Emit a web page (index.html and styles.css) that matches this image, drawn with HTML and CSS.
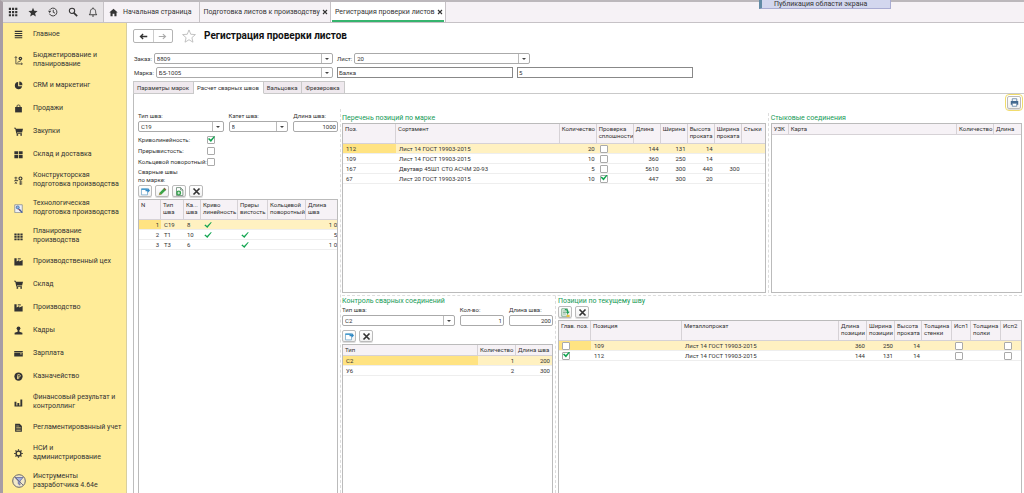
FILE: index.html
```html
<!DOCTYPE html>
<html lang="ru">
<head>
	<meta charset="utf-8">
	<title>Регистрация проверки листов</title>
	<link rel="stylesheet" href="styles.css">
</head>
<body>
<svg class="defs" width="0" height="0">
	<symbol id="i-grid" viewBox="0 0 12 12"><path d="M1 1h2.600v2.600H1zM4.800 1h2.600v2.600H4.800zM8.600 1h2.600v2.600H8.600zM1 4.800h2.600v2.600H1zM4.800 4.800h2.600v2.600H4.800zM8.600 4.800h2.600v2.600H8.600zM1 8.600h2.600v2.600H1zM4.800 8.600h2.600v2.600H4.800zM8.600 8.600h2.600v2.600H8.600z"/></symbol>
	<symbol id="i-star" viewBox="0 0 12 12"><path d="M6 .8l1.500 3.700 4 .3-3 2.600.9 3.900L6 9.200l-3.400 2.100.9-3.900-3-2.600 4-.3z"/></symbol>
	<symbol id="i-history" viewBox="0 0 12 12"><path d="M2 3.500A4.700 4.700 0 1 1 1.700 8M6.300 3.400v3l2.200 1" fill="none" stroke="currentColor" stroke-width="1.100"/><path d="M0 4.500h4L2 7.200z"/></symbol>
	<symbol id="i-search" viewBox="0 0 12 12"><circle cx="4.800" cy="4.600" r="3.200" fill="none" stroke="currentColor" stroke-width="1.300"/><path d="M7 7l4 4" stroke="currentColor" stroke-width="2"/></symbol>
	<symbol id="i-bell" viewBox="0 0 12 12"><path d="M1.500 9.300c1.800-1.500 1-3.300 1.600-5.100C3.600 2.700 4.700 2 6 2s2.400.7 2.900 2.200c.6 1.800-.2 3.600 1.600 5.100zM6 .6V2M4.800 10.800h2.400" fill="none" stroke="currentColor" stroke-width="1.100"/></symbol>
	<symbol id="i-home" viewBox="0 0 12 12"><path d="M6 1l5.600 5H10v5H7.200V7.600H4.800V11H2V6H.4z"/></symbol>
	<symbol id="i-lines" viewBox="0 0 12 12"><path d="M1 1h10v1.500H1zM1 3.900h10v1.500H1zM1 6.700h10v1.500H1zM1 9.500h10V11H1z"/></symbol>
	<symbol id="i-budget" viewBox="0 0 12 12"><path d="M2.500 1v9.500H11M1 2.500L2.500.8 4 2.500M4.500 8.500l5-2.500M9.500 9l1.700 1.500L9.500 12" fill="none" stroke="currentColor"/><circle cx="8.500" cy="3.300" r="2.400"/><circle cx="8.500" cy="3.300" r=".8" fill="#ffec98"/></symbol>
	<symbol id="i-pie" viewBox="0 0 12 12"><path d="M5.500 1.200a4.900 4.900 0 1 0 5.300 5.900H5.500z"/><path d="M7 .8a4.600 4.600 0 0 1 4.200 4.700H7z"/></symbol>
	<symbol id="i-bag" viewBox="0 0 12 12"><path d="M1.500 4h9v7.200h-9z"/><path d="M4 6V2.500c0-1.600 4-1.600 4 0V6" fill="none" stroke="currentColor" stroke-width="1.200"/></symbol>
	<symbol id="i-cart" viewBox="0 0 12 12"><path d="M0 1h2.300l.5 1.300H12l-1.200 4.900H3.900l.2.900h6.500v1H3.200L1.600 2H0z"/><circle cx="4.500" cy="10.500" r="1.200"/><circle cx="9.500" cy="10.500" r="1.200"/></symbol>
	<symbol id="i-boxes" viewBox="0 0 12 12"><path d="M.5 1.500h5v4h-5zM6.500 1.500h5v4h-5zM.5 6.500h5v4.500h-5zM6.500 6.500h5v4.500h-5z"/></symbol>
	<symbol id="i-gears" viewBox="0 0 12 12"><circle cx="8.600" cy="3.400" r="2" fill="none" stroke="currentColor" stroke-width="1.500"/><path d="M.5 2.500h4M.5 6h5M2.500 1v6M1 10.500l3-3M1 7.500l3 3M7 8h4M7 10.500h4M9 6v6" fill="none" stroke="currentColor"/></symbol>
	<symbol id="i-tech" viewBox="0 0 12 12"><path d="M1 1h10v10.500H1z" fill="#eef0f5" stroke="#7f8792"/><path d="M3 3.500l6 6" stroke="#d0453c" stroke-width="1.500"/><circle cx="5" cy="4.600" r="2" fill="#8cb4e0" stroke="#3c6eb0"/><path d="M7 7l4 4.500" stroke="#3f5c9c" stroke-width="1.600"/></symbol>
	<symbol id="i-plan" viewBox="0 0 12 12"><path d="M.5 2h3v2.500h-3zM4.500 2h3v2.500h-3zM8.500 2h3v2.500h-3zM.5 5.300h3v2.500h-3zM4.500 5.300h3v2.500h-3zM8.500 5.300h3v2.500h-3zM.5 8.600h3V11h-3zM4.500 8.600h3V11h-3zM8.500 8.600h3V11h-3z"/></symbol>
	<symbol id="i-factory" viewBox="0 0 12 12"><path d="M.5 11.300V1.500h3V6l3.500-2v2l4.500-2v7.300z"/><path d="M5 2.500h4" stroke="currentColor" stroke-width="1.400"/></symbol>
	<symbol id="i-person" viewBox="0 0 12 12"><circle cx="6" cy="3" r="2.500"/><path d="M4.800 5h2.400v2.500l4 1.500v2.300H.8V9l4-1.500z"/></symbol>
	<symbol id="i-wallet" viewBox="0 0 12 12"><path d="M.3 2.500h11.400v1.700H.3zM.3 5h11.400v5H.3z"/><path d="M8 6.500h2.500" stroke="#ffec98"/></symbol>
	<symbol id="i-coin" viewBox="0 0 12 12"><circle cx="6" cy="6" r="5.500"/><path d="M5 9.500v-6h1.800c2.300 0 2.300 3.200 0 3.200H4M4 8.200h3" fill="none" stroke="#ffec98"/></symbol>
	<symbol id="i-bars" viewBox="0 0 12 12"><path d="M.7 5h2.500v5H.7zM4.500 6.500H7V10H4.500zM8.500 2H11v8H8.500zM.7 10h10.300v1.200H.7z"/></symbol>
	<symbol id="i-report" viewBox="0 0 12 12"><path d="M1.500 1h6l3 3v7.500h-9z"/><path d="M3 4h4M3 6h6M3 8h6M3 10h6" stroke="#ffec98" stroke-width=".7"/></symbol>
	<symbol id="i-gear" viewBox="0 0 12 12"><circle cx="6" cy="6" r="3.200" fill="none" stroke="currentColor" stroke-width="1.800"/><path d="M6 .3v2M6 9.700v2M.3 6h2M9.700 6h2M2 2l1.300 1.300M8.700 8.700L10 10M10 2L8.700 3.300M2 10l1.300-1.300" stroke="currentColor" stroke-width="1.600"/></symbol>
	<symbol id="i-tools" viewBox="0 0 12 12"><circle cx="6" cy="6" r="5.400" fill="#f1e9c9" stroke="#5d5b66" stroke-width=".8"/><path d="M2.500 3h7L6.800 6v3.500L5.400 8.500V6z" fill="#a3b1e0" stroke="#67699a" stroke-width=".7"/><path d="M2.500 2.500l7 7" stroke="#6d6c80" stroke-width=".8"/></symbol>
	<symbol id="i-back" viewBox="0 0 12 12"><path d="M11 6H3M5.500 2.800L2 6l3.500 3.200" fill="none" stroke="currentColor" stroke-width="1.800"/></symbol>
	<symbol id="i-forward" viewBox="0 0 12 12"><path d="M1 6h8M6.500 2.800L10 6 6.500 9.200" fill="none" stroke="currentColor" stroke-width="1.500"/></symbol>
	<symbol id="i-close" viewBox="0 0 12 12"><path d="M2 2l8 8M10 2l-8 8" stroke="currentColor" stroke-width="2.200"/></symbol>
	<symbol id="i-tick" viewBox="0 0 12 12"><path d="M.5 6.500l1.800-1.300L4.500 7.500 10.500 1.500l1 .8L5 10.500z" fill="#12a550"/></symbol>
	<symbol id="i-add" viewBox="0 0 12 12"><path d="M.7 2.500h8v8h-8z" fill="#fff" stroke="#6fa5c9"/><path d="M.5 2h8v2h-8z" fill="#4b9ed0"/><path d="M6 3.500h3V1l3 3.500-3 3V5.800H6z" fill="#3289c4"/></symbol>
	<symbol id="i-edit" viewBox="0 0 12 12"><path d="M1 11l1-3.500L8.500 1 11 3.500 4.500 10z" fill="#3ba447"/><path d="M1 11l1-3.500L4.500 10z" fill="#b98e4c"/><path d="M8.500 1L11 3.500l-1 1L7.500 2z" fill="#9c5a48"/></symbol>
	<symbol id="i-refill" viewBox="0 0 12 12"><path d="M2 .8h5.500L10.500 4v7.300H2z" fill="#fff" stroke="#5c7c68"/><path d="M7.500.8V4h3" fill="none" stroke="#5c7c68"/><circle cx="5" cy="8" r="3.300" fill="#2fa048"/><path d="M3.200 8h3.600M5 6.200v3.600" stroke="#fff"/></symbol>
	<symbol id="i-fill" viewBox="0 0 12 12"><path d="M1 1h7.500v10H1z" fill="#f4faf4" stroke="#5e9a70"/><path d="M2.500 4h4M2.500 6h4M2.500 8h4" stroke="#6a9c7c"/><path d="M5 1.500c3-.5 5 .5 5 3.500h1.800L9 8 6.300 5H8c0-1.500-1-2-3-2z" fill="#1e9e55"/><path d="M7.500 9h4v3h-4z" fill="#e6c040"/></symbol>
	<symbol id="i-print" viewBox="0 0 12 12"><path d="M3 1h6v3.500H3z" fill="#fff" stroke="#53779b"/><path d="M1 4h10v5H1z" fill="#42688f"/><path d="M3 7h6v4H3z" fill="#fff" stroke="#53779b"/></symbol>
</svg>

<div class="app">
	<div class="share-hint">Публикация области экрана</div>

	<header class="topbar">
		<div class="tools">
			<button type="button" aria-label="Меню"><svg><use href="#i-grid"/></svg></button>
			<button type="button" aria-label="Избранное"><svg><use href="#i-star"/></svg></button>
			<button type="button" aria-label="История"><svg><use href="#i-history"/></svg></button>
			<button type="button" aria-label="Поиск"><svg><use href="#i-search"/></svg></button>
			<button type="button" aria-label="Уведомления"><svg><use href="#i-bell"/></svg></button>
		</div>
		<nav class="windows">
			<a href="#" class="window home"><svg><use href="#i-home"/></svg>Начальная страница</a>
			<a href="#" class="window">Подготовка листов к производству<svg class="x"><use href="#i-close"/></svg></a>
			<a href="#" class="window active">Регистрация проверки листов<svg class="x"><use href="#i-close"/></svg></a>
		</nav>
	</header>

	<div class="body">
		<nav class="sidebar">
			<a href="#"><svg><use href="#i-lines"/></svg><span>Главное</span></a>
			<a href="#"><svg><use href="#i-budget"/></svg><span>Бюджетирование и<br>планирование</span></a>
			<a href="#"><svg><use href="#i-pie"/></svg><span>CRM и маркетинг</span></a>
			<a href="#"><svg><use href="#i-bag"/></svg><span>Продажи</span></a>
			<a href="#"><svg><use href="#i-cart"/></svg><span>Закупки</span></a>
			<a href="#"><svg><use href="#i-boxes"/></svg><span>Склад и доставка</span></a>
			<a href="#"><svg><use href="#i-gears"/></svg><span>Конструкторская<br>подготовка производства</span></a>
			<a href="#"><svg><use href="#i-tech"/></svg><span>Технологическая<br>подготовка производства</span></a>
			<a href="#"><svg><use href="#i-plan"/></svg><span>Планирование<br>производства</span></a>
			<a href="#"><svg><use href="#i-factory"/></svg><span>Производственный цех</span></a>
			<a href="#"><svg><use href="#i-cart"/></svg><span>Склад</span></a>
			<a href="#"><svg><use href="#i-factory"/></svg><span>Производство</span></a>
			<a href="#"><svg><use href="#i-person"/></svg><span>Кадры</span></a>
			<a href="#"><svg><use href="#i-wallet"/></svg><span>Зарплата</span></a>
			<a href="#"><svg><use href="#i-coin"/></svg><span>Казначейство</span></a>
			<a href="#"><svg><use href="#i-bars"/></svg><span>Финансовый результат и<br>контроллинг</span></a>
			<a href="#"><svg><use href="#i-report"/></svg><span>Регламентированный учет</span></a>
			<a href="#"><svg><use href="#i-gear"/></svg><span>НСИ и<br>администрирование</span></a>
			<a href="#"><svg class="big"><use href="#i-tools"/></svg><span>Инструменты<br>разработчика 4.64e</span></a>
		</nav>

		<main class="form">
			<div class="title">
				<div class="history">
					<button type="button" aria-label="Назад"><svg><use href="#i-back"/></svg></button>
					<button type="button" aria-label="Вперед" class="off"><svg><use href="#i-forward"/></svg></button>
				</div>
				<svg class="fav" viewBox="0 0 12 12"><path d="M6 .8l1.500 3.700 4 .3-3 2.600.9 3.900L6 9.200l-3.400 2.100.9-3.900-3-2.600 4-.3z"/></svg>
				<h1>Регистрация проверки листов</h1>
			</div>

			<div class="head">
				<div class="line">
					<div class="pair"><label for="order">Заказ:</label><select id="order"><option>8809</option></select></div>
					<div class="pair"><label for="sheet">Лист:</label><select id="sheet"><option>20</option></select></div>
				</div>
				<div class="line">
					<div class="pair"><label for="mark">Марка:</label><select id="mark"><option>Б5-1005</option></select></div>
					<input class="plain" type="text" value="Балка" aria-label="Наименование">
					<input class="plain" type="text" value="5" aria-label="Количество">
				</div>
			</div>

			<div class="tabs" role="tablist">
				<button type="button" role="tab">Параметры марок</button>
				<button type="button" role="tab" class="active">Расчет сварных швов</button>
				<button type="button" role="tab">Вальцовка</button>
				<button type="button" role="tab">Фрезеровка</button>
			</div>

			<div class="page">
				<div class="printbar">
					<button type="button" class="tool print" aria-label="Печать"><svg><use href="#i-print"/></svg></button>
				</div>
				<div class="panes">
					<section class="seams">
						<div class="fields">
							<div class="field w-type"><label for="s-type">Тип шва:</label><select id="s-type"><option>С19</option></select></div>
							<div class="field w-leg"><label for="s-leg">Катет шва:</label><select id="s-leg"><option>8</option></select></div>
							<div class="field w-len"><label for="s-len">Длина шва:</label><input id="s-len" class="num" type="text" value="1000"></div>
						</div>
						<div class="checks">
							<label for="c1">Криволинейность:</label><input id="c1" type="checkbox" checked>
							<label for="c2">Прерывистость:</label><input id="c2" type="checkbox">
							<label for="c3">Кольцевой поворотный:</label><input id="c3" type="checkbox">
						</div>
						<p class="caption">Сварные швы<br>по марке:</p>
						<div class="toolbar">
							<button type="button" class="tool" aria-label="Добавить"><svg><use href="#i-add"/></svg></button>
							<button type="button" class="tool" aria-label="Изменить"><svg><use href="#i-edit"/></svg></button>
							<button type="button" class="tool" aria-label="Скопировать"><svg><use href="#i-refill"/></svg></button>
							<button type="button" class="tool" aria-label="Удалить"><svg><use href="#i-close"/></svg></button>
						</div>
						<div class="list open">
							<table>
								<colgroup><col width="22"><col width="23"><col width="17"><col width="37"><col width="30"><col width="38"><col></colgroup>
								<thead><tr class="two"><th>N</th><th>Тип<br>шва</th><th>Ка...<br>шва</th><th>Криво<br>линейность</th><th>Преры<br>вистость</th><th>Кольцевой<br>поворотный</th><th>Длина<br>шва</th></tr></thead>
								<tbody>
									<tr class="sel"><td class="r cur">1</td><td>С19</td><td>8</td><td><svg class="tick"><use href="#i-tick"/></svg></td><td></td><td></td><td class="r cut">1 0</td></tr>
									<tr><td class="r">2</td><td>Т1</td><td>10</td><td><svg class="tick"><use href="#i-tick"/></svg></td><td><svg class="tick"><use href="#i-tick"/></svg></td><td></td><td class="r cut">5</td></tr>
									<tr><td class="r">3</td><td>Т3</td><td>6</td><td></td><td><svg class="tick"><use href="#i-tick"/></svg></td><td></td><td class="r cut">1 0</td></tr>
								</tbody>
							</table>
						</div>
					</section>

					<div class="right">
						<div class="upper">
							<section class="positions">
								<h2>Перечень позиций по марке</h2>
								<div class="list">
									<table>
										<colgroup><col width="53"><col><col width="37"><col width="37"><col width="27"><col width="27"><col width="27"><col width="27"><col width="23"></colgroup>
										<thead><tr class="two"><th>Поз.</th><th>Сортамент</th><th>Количество</th><th>Проверка<br>сплошности</th><th>Длина</th><th>Ширина</th><th>Высота<br>проката</th><th>Ширина<br>проката</th><th>Стыки</th></tr></thead>
										<tbody>
											<tr class="sel"><td class="cur">112</td><td>Лист 14 ГОСТ 19903-2015</td><td class="r">20</td><td><input type="checkbox" aria-label="Проверка"></td><td class="r">144</td><td class="r">131</td><td class="r">14</td><td></td><td></td></tr>
											<tr><td>109</td><td>Лист 14 ГОСТ 19903-2015</td><td class="r">10</td><td><input type="checkbox" aria-label="Проверка"></td><td class="r">360</td><td class="r">250</td><td class="r">14</td><td></td><td></td></tr>
											<tr><td>167</td><td>Двутавр 45Ш1 СТО АСЧМ 20-93</td><td class="r">5</td><td><input type="checkbox" aria-label="Проверка"></td><td class="r">5610</td><td class="r">300</td><td class="r">440</td><td class="r">300</td><td></td></tr>
											<tr><td>67</td><td>Лист 20 ГОСТ 19903-2015</td><td class="r">10</td><td><input type="checkbox" aria-label="Проверка" checked></td><td class="r">447</td><td class="r">300</td><td class="r">20</td><td></td><td></td></tr>
										</tbody>
									</table>
								</div>
							</section>
							<section class="joints">
								<h2>Стыковые соединения</h2>
								<div class="list">
									<table>
										<colgroup><col width="17"><col><col width="37"><col width="27"></colgroup>
										<thead><tr><th>УЗК</th><th>Карта</th><th>Количество</th><th>Длина</th></tr></thead>
									</table>
								</div>
							</section>
						</div>

						<div class="lower">
							<section class="control">
								<h2>Контроль сварных соединений</h2>
								<div class="fields">
									<div class="field w-kind"><label for="k-type">Тип шва:</label><select id="k-type"><option>С2</option></select></div>
									<div class="field w-len"><label for="k-count">Кол-во:</label><input id="k-count" class="num" type="text" value="1"></div>
									<div class="field w-len"><label for="k-len">Длина шва:</label><input id="k-len" class="num" type="text" value="200"></div>
								</div>
								<div class="toolbar">
									<button type="button" class="tool" aria-label="Добавить"><svg><use href="#i-add"/></svg></button>
									<button type="button" class="tool" aria-label="Удалить"><svg><use href="#i-close"/></svg></button>
								</div>
								<div class="list open">
									<table>
										<colgroup><col><col width="38"><col width="36"></colgroup>
										<thead><tr><th>Тип</th><th>Количество</th><th>Длина шва</th></tr></thead>
										<tbody>
											<tr class="sel"><td class="cur">С2</td><td class="r">1</td><td class="r">200</td></tr>
											<tr><td>У6</td><td class="r">2</td><td class="r">300</td></tr>
										</tbody>
									</table>
								</div>
							</section>
							<section class="current">
								<h2>Позиции по текущему шву</h2>
								<div class="toolbar">
									<button type="button" class="tool" aria-label="Заполнить"><svg><use href="#i-fill"/></svg></button>
									<button type="button" class="tool" aria-label="Удалить"><svg><use href="#i-close"/></svg></button>
								</div>
								<div class="list open">
									<table>
										<colgroup><col width="32"><col width="91"><col><col width="28"><col width="28"><col width="27"><col width="30"><col width="19"><col width="30"><col width="20"></colgroup>
										<thead><tr class="two"><th>Глав. поз.</th><th>Позиция</th><th>Металлопрокат</th><th>Длина<br>позиции</th><th>Ширина<br>позиции</th><th>Высота<br>проката</th><th>Толщина<br>стенки</th><th>Исп1</th><th>Толщина<br>полки</th><th>Исп2</th></tr></thead>
										<tbody>
											<tr class="sel"><td class="cur"><input type="checkbox" aria-label="Главная"></td><td>109</td><td>Лист 14 ГОСТ 19903-2015</td><td class="r">360</td><td class="r">250</td><td class="r">14</td><td></td><td><input type="checkbox" aria-label="Исп1"></td><td></td><td><input type="checkbox" aria-label="Исп2"></td></tr>
											<tr><td><input type="checkbox" aria-label="Главная" checked></td><td>112</td><td>Лист 14 ГОСТ 19903-2015</td><td class="r">144</td><td class="r">131</td><td class="r">14</td><td></td><td><input type="checkbox" aria-label="Исп1"></td><td></td><td><input type="checkbox" aria-label="Исп2"></td></tr>
										</tbody>
									</table>
								</div>
							</section>
						</div>
					</div>
				</div>
			</div>
		</main>
	</div>
</div>
</body>
</html>
```
FILE: styles.css
```css
* {
	box-sizing: border-box;
}
body {
	margin: 0;
	font-family: Roboto, sans-serif;
	font-size: 6px;
	line-height: 8px;
	color: #333;
	background: #fff;
}
h1, h2, p {
	margin: 0;
}
button, input, select {
	font: inherit;
	color: inherit;
	margin: 0;
	padding: 0;
}
a {
	color: inherit;
	text-decoration: none;
}
svg {
	width: 9px;
	height: 9px;
	flex: none;
	fill: currentColor;
}
.defs {
	position: absolute;
}

.app {
	display: flex;
	flex-direction: column;
	height: 100vh;
	overflow: hidden;
	border-top: 2px solid #bcb8bc;
	border-left: 3px solid #a79da5;
}
.share-hint {
	position: absolute;
	top: 0;
	right: 133px;
	width: 132px;
	height: 9px;
	padding-left: 12px;
	font-size: 7px;
	line-height: 8px;
	background: #d3d7ee;
	border: 1px solid #a9acd2;
	border-top: 0;
	border-left: 3px solid #628ba5;
}

/* верхняя панель */
.topbar {
	display: flex;
	flex: none;
	height: 21px;
	background: #f6f2f6;
	border-bottom: 1px solid #c6c2c6;
}
.tools {
	display: flex;
	align-items: center;
	justify-content: space-around;
	width: 101px;
	background: #e6e3e6;
	border-right: 1px solid #c6c2c6;
}
.tools button {
	display: flex;
	padding: 0;
	border: 0;
	background: none;
}
.tools svg {
	width: 10px;
	height: 10px;
}
.windows {
	display: flex;
	font-size: 7px;
}
.window {
	display: flex;
	align-items: center;
	gap: 2px;
	padding: 0 2px 0 4px;
	border-right: 1px solid #c6c2c6;
}
.window.home {
	gap: 5px;
	padding: 0 7px 0 5px;
}
.window .x {
	width: 6px;
	height: 6px;
}
.window.active {
	background: linear-gradient(#36b46e, #36b46e) 1px 100% / calc(100% - 2px) 2px no-repeat #fff;
}

.body {
	display: flex;
	flex: 1;
	min-height: 0;
}
.sidebar {
	flex: none;
	width: 124px;
	overflow: hidden;
	background: #ffec98;
	border-right: 1px solid #d8cf9f;
	font-size: 7px;
	line-height: 9px;
}
.sidebar a {
	display: flex;
	align-items: center;
	gap: 10px;
	min-height: 23px;
	padding: 5px 0 5px 11px;
}
.sidebar svg.big {
	margin: 0 -3px 0 -2px;
	width: 14px;
	height: 14px;
}

/* форма */
.form {
	display: flex;
	flex-direction: column;
	flex: 1;
	min-width: 0;
	padding-left: 6px;
}
.title {
	display: flex;
	align-items: center;
	height: 26px;
	flex: none;
}
.history {
	display: flex;
	width: 40px;
	height: 14px;
	border: 1px solid #b4b4b4;
	border-radius: 2px;
}
.history button {
	display: flex;
	align-items: center;
	justify-content: center;
	flex: 1;
	border: 0;
	background: none;
}
.history .off {
	color: #aaa;
	border-left: 1px solid #ccc;
}
.fav {
	width: 14px;
	height: 14px;
	margin: 0 8px 0 9px;
	fill: none;
	stroke: #b5b5b5;
	stroke-width: .7;
}
h1 {
	font-size: 10px;
	line-height: 14px;
	color: #111;
}
.head {
	display: flex;
	flex-direction: column;
	gap: 3px;
	padding: 4px 0 3px 1px;
}
.line {
	display: flex;
	gap: 4px;
}
.pair {
	display: flex;
	align-items: center;
	width: 199px;
	flex: none;
}
.pair + .pair {
	width: 193px;
}
.pair label {
	flex: none;
	min-width: 14px;
	margin-right: 2px;
}
select, input[type=text] {
	appearance: none;
	width: 100%;
	min-width: 0;
	height: 11px;
	padding: 0 2px;
	border: 1px solid #aaa;
	border-radius: 2px;
	outline: 0;
	line-height: 9px;
	background: #fff;
}
select {
	background: url("data:image/svg+xml,%3Csvg xmlns='http://www.w3.org/2000/svg' width='11' height='9'%3E%3Cpath d='M.5 0v9' stroke='%23bbb'/%3E%3Cpath d='M4 4h4L6 6z' fill='%23444'/%3E%3C/svg%3E") right center no-repeat #fff;
}
input.plain {
	width: 176px;
	padding: 0 1px;
	border-color: #888;
	border-radius: 0;
}
input.num {
	padding: 0 1px;
	text-align: right;
}
input[type=checkbox] {
	appearance: none;
	display: block;
	position: relative;
	width: 8px;
	height: 8px;
	border: 1px solid #aaa;
	border-radius: 1px;
	background: #fff;
}
input[type=checkbox]:checked::after {
	content: "";
	position: absolute;
	left: 0;
	top: -1px;
	width: 7px;
	height: 6px;
	background: #12a550;
	clip-path: polygon(0 50%, 15% 35%, 40% 60%, 88% 0, 100% 12%, 42% 100%);
}

.tabs {
	display: flex;
	flex: none;
	height: 13px;
	border-bottom: 1px solid #c9c9c9;
}
.tabs button {
	height: 13px;
	padding: 0 4px 0 3px;
	border: 1px solid #c9c9c9;
	border-left: 0;
	background: #efe9ee;
}
.tabs button:first-child {
	border-left: 1px solid #c9c9c9;
}
.tabs .active {
	background: #fff;
	border-bottom-color: #fff;
}

.page {
	display: flex;
	flex-direction: column;
	flex: 1;
	min-height: 0;
	padding: 2px 2px 0 4px;
	border-left: 1px solid #bdbdbd;
}
.printbar {
	display: flex;
	justify-content: flex-end;
	flex: none;
	padding-right: 1px;
}
.tool {
	display: flex;
	align-items: center;
	justify-content: center;
	width: 14px;
	height: 12px;
	border: 1px solid #bbb;
	border-radius: 2px;
	background: linear-gradient(#fff, #f1f1f1);
	box-shadow: 0 1px 0 #ddd;
}
.print {
	height: 13px;
	outline: 1px solid #f1dc6c;
	outline-offset: 1px;
}
.toolbar {
	display: flex;
	gap: 3px;
	margin-bottom: 2px;
}
.panes {
	display: flex;
	flex: 1;
	min-height: 0;
}
section {
	display: flex;
	flex-direction: column;
	min-width: 0;
	min-height: 0;
}
.seams {
	flex: none;
	width: 203px;
	padding: 3px 2px 0 0;
	border-right: 1px dashed #ddd;
}
.fields {
	display: flex;
	gap: 5px;
	margin-bottom: 4px;
}
.field label {
	display: block;
	height: 9px;
}
.w-type {
	flex: 86;
}
.w-leg {
	flex: 60;
}
.w-len {
	flex: 45;
	white-space: nowrap;
}
.w-kind {
	flex: 115;
}
.checks {
	display: grid;
	grid-template-columns: 69px 8px;
	row-gap: 3px;
	align-items: center;
	white-space: nowrap;
}
.caption {
	margin: 2px 0 1px;
}
h2 {
	height: 10px;
	font-size: 7px;
	line-height: 10px;
	font-weight: normal;
	color: #159a56;
}
.right {
	display: flex;
	flex-direction: column;
	flex: 1;
	min-width: 0;
	padding-left: 1px;
}
.upper {
	display: grid;
	grid-template-columns: 426fr 253fr;
	height: 187px;
	padding: 4px 0 2px;
	border-bottom: 1px dashed #ddd;
}
.positions {
	padding-right: 2px;
	border-right: 1px dashed #ddd;
}
.joints {
	padding-left: 2px;
}
.lower {
	display: grid;
	grid-template-columns: 214px 1fr;
	flex: 1;
	min-height: 0;
}
.control {
	padding-right: 2px;
	border-right: 1px dashed #ddd;
}
.current {
	padding-left: 2px;
}

/* табличные части */
.list {
	flex: 1;
	min-height: 0;
	overflow: hidden;
	border: 1px solid #bbb;
}
.list.open {
	border-bottom: 0;
}
table {
	width: 100%;
	table-layout: fixed;
	border-collapse: separate;
	border-spacing: 0;
}
th {
	height: 11px;
	padding: 1px 0 0 2px;
	overflow: hidden;
	font-weight: normal;
	line-height: 7px;
	text-align: left;
	vertical-align: top;
	white-space: nowrap;
	background: #f6f2f6;
	border-right: 1px solid #d6d2d6;
	border-bottom: 1px solid #d6d2d6;
}
.two th {
	height: 20px;
}
td {
	height: 10px;
	padding: 0 2px 0 3px;
	overflow: hidden;
	white-space: nowrap;
	border-bottom: 1px solid #eee;
}
th:last-child {
	border-right: 0;
}
.r {
	text-align: right;
}
td.cut {
	padding-right: 0;
}
.sel td {
	background: #fff1c1;
}
.sel td.cur {
	background: #ffe382;
}
.tick {
	display: block;
	width: 8px;
	height: 8px;
}
```
